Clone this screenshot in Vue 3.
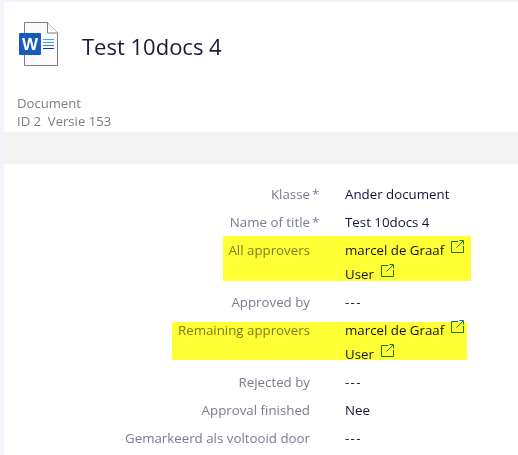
<template>
  <div class="page">
    <div class="panel">
      <header class="head">
        <svg class="doc-icon" width="40" height="48" viewBox="0 0 40 48">
          <path d="M5.500 3.500H28.500L38.500 14V46.500H5.500Z" fill="#fafafa" stroke="#7f7f7f" />
          <path d="M28.500 3.500V14H38.500" fill="#fff" stroke="#7f7f7f" />
          <rect x="0" y="14" width="22" height="22" rx="1" fill="#185abd" />
          <text x="11" y="30.500" class="doc-w" text-anchor="middle">W</text>
          <path d="M24 20.500H35M24 23.500H35" stroke="#41a5ee" />
          <path d="M24 26.500H35" stroke="#2b7cd3" />
          <path d="M24 29.500H35" stroke="#103f91" />
        </svg>
        <h1 class="title">Test 10docs 4</h1>
      </header>
      <div class="meta">
        <div>Document</div>
        <div>ID 2&nbsp; Versie 153</div>
      </div>
      <div class="band"></div>
      <div class="form">
        <div v-for="row in rows" :key="row.label" class="row">
          <div class="label">
            {{ row.label }}<span v-if="row.required" class="star">*</span>
          </div>
          <div class="value">
            <div v-if="row.people">
              <div v-for="p in row.people" :key="p" class="person">
                <span>{{ p }}</span>
                <svg class="ext" width="13" height="13" viewBox="0 0 13 13" fill="none">
                  <path d="M7 1.500H.5V12.500H12.500V6" stroke="#0e7a3f" />
                  <path d="M5.500 7.500L12 1M8.500 .5H12.500V4.500" stroke="#0f7f8f" />
                </svg>
              </div>
            </div>
            <span v-else :class="{ dash: row.value === '---' }">{{ row.value }}</span>
          </div>
          <div v-if="row.mark" class="mark" :class="row.mark"></div>
        </div>
      </div>
    </div>
  </div>
</template>

<script setup>
const rows = [
  { label: 'Klasse', required: true, value: 'Ander document' },
  { label: 'Name of title', required: true, value: 'Test 10docs 4' },
  { label: 'All approvers', people: ['marcel de Graaf', 'User'], mark: 'mark-a' },
  { label: 'Approved by', value: '---' },
  { label: 'Remaining approvers', people: ['marcel de Graaf', 'User'], mark: 'mark-b' },
  { label: 'Rejected by', value: '---' },
  { label: 'Approval finished', value: 'Nee' },
  { label: 'Gemarkeerd als voltooid door', value: '---' }
]
</script>

<style>
html, body { margin: 0; background: #f3f4f9; overflow: hidden; }
</style>

<style scoped>
.page { width: 518px; height: 455px; padding: 2px 0 0 4px; box-sizing: border-box; font-family: "Open Sans", "Noto Sans", sans-serif; overflow: hidden; }
.panel { background: #fff; height: 453px; }

.head { display: flex; align-items: center; height: 84px; padding-left: 15px; box-sizing: border-box; }
.doc-icon { margin-top: -2px; flex-shrink: 0; }
.doc-w { font: 700 17px "Liberation Sans", sans-serif; fill: #fff; }
.title { margin: 0 0 0 23px; font-size: 22px; font-weight: 400; color: #1b1a3a; position: relative; top: 2px; }

.meta { padding: 8px 0 0 13px; height: 46px; box-sizing: border-box; font-size: 13.100px; line-height: 18px; color: #7d7a85; }

.band { height: 32px; background: #f3f3f3; }

.form { padding-top: 16px; }
.row { display: flex; position: relative; min-height: 28px; }
.label { width: 306px; text-align: right; font-size: 13.300px; line-height: 28px; color: #7b7a90; position: relative; white-space: nowrap; }
.star { position: absolute; left: 100%; margin-left: 2px; }
.value { margin-left: 35px; font-size: 13.300px; line-height: 28px; color: #13133c; }
.dash { letter-spacing: 1.300px; }
.person { display: flex; height: 24px; }
.person:last-child { height: 28px; }
.ext { margin: 4px 0 0 7px; }

.mark { position: absolute; background: #ffff33; mix-blend-mode: multiply; pointer-events: none; }
.mark-a { left: 219px; top: 0; width: 248px; height: 45px; }
.mark-b { left: 168px; top: 6px; width: 295px; height: 38px; }
</style>
